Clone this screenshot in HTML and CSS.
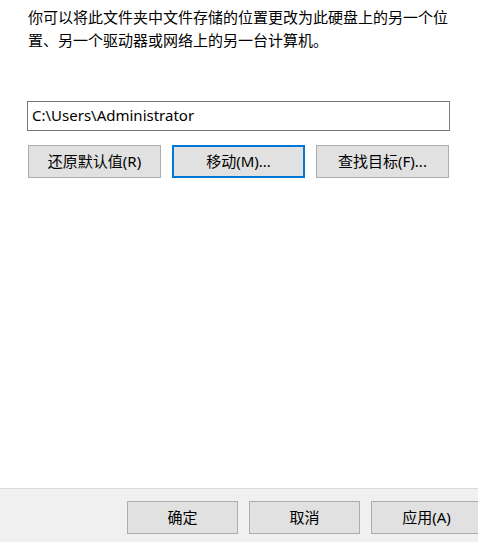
FILE: index.html
```html
<!DOCTYPE html>
<html lang="zh-CN">
<head>
<meta charset="utf-8">
<link rel="stylesheet" href="styles.css">
</head>
<body>
<div class="window">
  <main class="content">
    <p class="desc">你可以将此文件夹中文件存储的位置更改为此硬盘上的另一个位置、另一个驱动器或网络上的另一台计算机。</p>
    <div class="path">C:\Users\Administrator</div>
    <div class="actions">
      <button class="btn">还原默认值(R)</button>
      <button class="btn focused">移动(M)...</button>
      <button class="btn">查找目标(F)...</button>
    </div>
  </main>
  <footer class="footer">
    <button class="btn fbtn">确定</button>
    <button class="btn fbtn">取消</button>
    <button class="btn fbtn">应用(A)</button>
  </footer>
</div>
</body>
</html>
```

FILE: styles.css
```css
* { box-sizing: border-box; }
html, body {
  margin: 0;
  padding: 0;
  width: 478px;
  height: 542px;
  overflow: hidden;
  background: #ffffff;
  font-family: "Noto Sans", "Noto Sans CJK SC", sans-serif;
  font-size: 15px;
  color: #000;
}
.window {
  display: flex;
  flex-direction: column;
  height: 542px;
}
.content {
  flex: 1;
  background: #fff;
  padding: 5px 28px 0 27px;
}
.desc {
  margin: 0 0 50px 1px;
  line-height: 23px;
  width: 425px;
  font-family: "Noto Sans CJK SC", sans-serif;
}
.path {
  height: 30px;
  width: 423px;
  border: 1px solid #7a7a7a;
  padding: 0 4px 3px;
  display: flex;
  align-items: center;
  font-size: 15px;
  white-space: nowrap;
}
.actions {
  display: flex;
  gap: 11px;
  margin-top: 14px;
  padding-left: 1px;
}
.btn {
  font-family: "Noto Sans", "Noto Sans CJK SC", sans-serif;
  font-size: 15px;
  color: #000;
  background: #e1e1e1;
  border: 1px solid #adadad;
  width: 133px;
  height: 33px;
  padding: 0 0 3px;
  margin: 0;
  display: flex;
  align-items: center;
  justify-content: center;
  flex: none;
}
.btn.focused {
  border: 2px solid #0078d7;
}
.footer {
  height: 54px;
  background: #f0f0f0;
  border-top: 1px solid #dadada;
  display: flex;
  gap: 11px;
  padding: 12px 0 0 127px;
  overflow: hidden;
}
.fbtn {
  width: 111px;
  height: 33px;
}
```
